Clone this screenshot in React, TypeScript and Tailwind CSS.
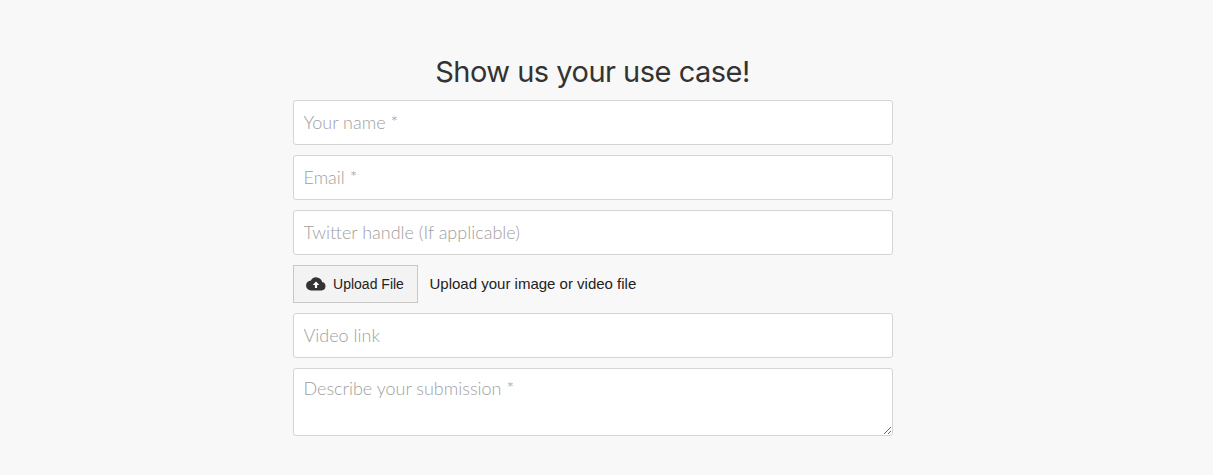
import React from "react";

export default function App() {
  const inp = "w-full h-[45px] border border-[#d4d4d4] rounded-[3px] bg-white px-[10px] pb-[2px] text-[18px] font-light text-[#333] placeholder:text-[#a0a0a0] outline-none";
  return (
    <div className="min-h-[475px] bg-[#f8f8f8] flex justify-center pr-[28px]" style={{ fontFamily: "Lato, 'Open Sans', sans-serif" }}>
      <div className="w-[600px] pt-[53px] flex flex-col">
        <h1 className="text-center text-[29px] leading-[38px] text-[#333] tracking-[-0.5px] mb-[9px]" style={{ fontFamily: "Inter, sans-serif" }}>Show us your use case!</h1>
        <div className="flex flex-col gap-[10px]">
          <input className={inp} placeholder="Your name *" />
          <input className={inp} placeholder="Email *" />
          <input className={inp} placeholder="Twitter handle (If applicable)" />
          <div className="flex items-center gap-[12px]" style={{ fontFamily: "'Liberation Sans', Arial, sans-serif" }}>
            <button className="h-[38px] w-[125px] border border-[#c8c8c8] bg-[#f3f3f3] flex items-center justify-center gap-[7px] text-[14px] text-[#222]">
              <svg width="20" height="16" viewBox="0 0 20 16"><path d="M16.1 6.1A6 6 0 0 0 4.9 4.6 4.9 4.9 0 0 0 5 14.4h10.7a4.2 4.2 0 0 0 .4-8.3z" fill="#333"/><path d="M10 5.5l-3.3 3.5h2.2v3h2.2v-3h2.2z" fill="#fff"/></svg>
              Upload File
            </button>
            <span className="text-[15px] text-[#222]">Upload your image or video file</span>
          </div>
          <input className={inp} placeholder="Video link" />
          <textarea className="w-full h-[68px] border border-[#d4d4d4] rounded-[3px] bg-white px-[10px] pt-[6px] text-[18px] font-light placeholder:text-[#a0a0a0] outline-none resize-y" placeholder="Describe your submission *" />
        </div>
      </div>
    </div>
  );
}
